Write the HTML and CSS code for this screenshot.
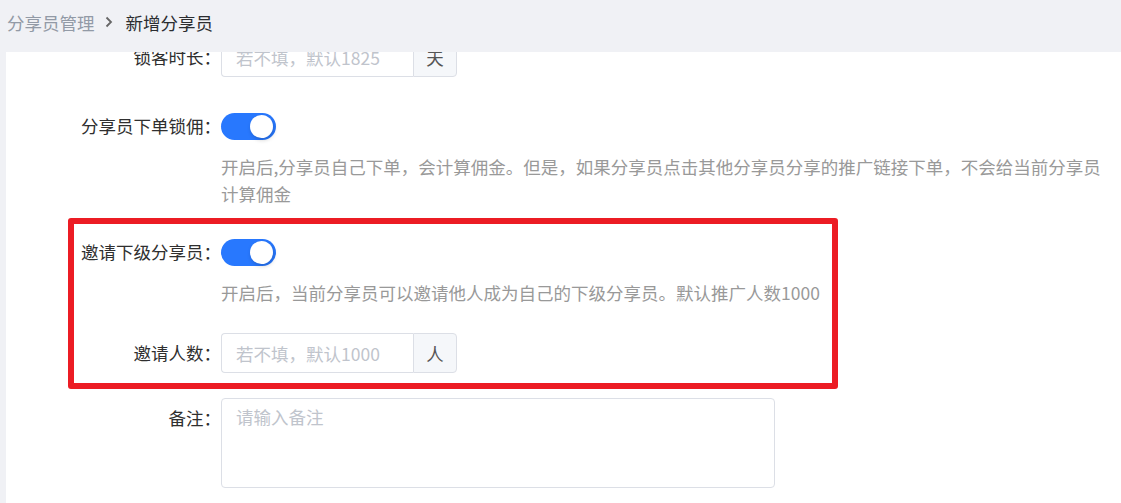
FILE: index.html
```html
<!DOCTYPE html>
<html lang="zh">
<head>
<meta charset="utf-8">
<link rel="stylesheet" href="styles.css">
</head>
<body>
<div class="page">
  <header class="crumbs">
    <span class="crumb-link">分享员管理</span>
    <svg class="crumb-sep" width="8" height="12" viewBox="0 0 8 12"><path d="M1.5 1.5 L6 6 L1.5 10.5" fill="none" stroke="#666" stroke-width="1.8"/></svg>
    <span class="crumb-current">新增分享员</span>
  </header>
  <main class="content">
    <form class="form">
      <div class="item item-first">
        <label class="item-label">锁客时长：</label>
        <div class="item-body">
          <div class="input-group">
            <input class="input" placeholder="若不填，默认1825">
            <span class="append">天</span>
          </div>
        </div>
      </div>
      <div class="item">
        <label class="item-label">分享员下单锁佣：</label>
        <div class="item-body">
          <div class="switch-row"><span class="switch is-on"><span class="knob"></span></span></div>
          <p class="hint">开启后,分享员自己下单，会计算佣金。但是，如果分享员点击其他分享员分享的推广链接下单，不会给当前分享员计算佣金</p>
        </div>
      </div>
      <div class="item item-invite">
        <label class="item-label">邀请下级分享员：</label>
        <div class="item-body">
          <div class="switch-row"><span class="switch is-on"><span class="knob"></span></span></div>
          <p class="hint">开启后，当前分享员可以邀请他人成为自己的下级分享员。默认推广人数1000</p>
        </div>
      </div>
      <div class="item">
        <label class="item-label">邀请人数：</label>
        <div class="item-body">
          <div class="input-group">
            <input class="input" placeholder="若不填，默认1000">
            <span class="append">人</span>
          </div>
        </div>
      </div>
      <div class="item">
        <label class="item-label">备注：</label>
        <div class="item-body">
          <textarea class="textarea" placeholder="请输入备注"></textarea>
        </div>
      </div>
    </form>
    <div class="highlight"></div>
  </main>
</div>
</body>
</html>
```

FILE: styles.css
```css
* { box-sizing: border-box; }
html, body { margin: 0; padding: 0; }
body {
  background: #f0f1f5;
  font-family: "Noto Sans CJK SC", "Noto Sans", sans-serif;
  font-size: 17.5px;
  color: #333;
  width: 1121px;
  height: 503px;
  overflow: hidden;
}
.page { display: flex; flex-direction: column; height: 503px; }
.crumbs {
  height: 52px;
  flex: none;
  display: flex;
  align-items: center;
  padding: 0 7px 8px;
  position: relative;
  z-index: 2;
  background: #f0f1f5;
}
.crumb-link { color: #929aa6; }
.crumb-sep { margin: 0 13px 0 10px; }
.crumb-current { color: #2b2d30; }
.content {
  flex: 1;
  margin-left: 6px;
  background: #fff;
  overflow: hidden;
  position: relative;
}
.form { margin: -15px 0 0; padding: 0; }
.item { display: flex; margin-bottom: 25px; }
.item-first { margin-bottom: 29px; }
.item-invite { margin-bottom: 27px; }
.item-label {
  width: 215px;
  flex: none;
  text-align: right;
  line-height: 40px;
  color: #2f2f2f;
}
.item-body { flex: 1; min-width: 0; padding-right: 14px; }
.input-group { display: flex; height: 40px; width: 236px; }
.input {
  width: 192px;
  height: 40px;
  border: 1px solid #dcdfe6;
  border-right: none;
  border-radius: 4px 0 0 4px;
  padding: 0 14px;
  font: inherit;
  color: #606266;
  outline: none;
}
.input::placeholder, .textarea::placeholder { color: #c0c4cc; }
.append {
  width: 44px;
  height: 40px;
  border: 1px solid #dcdfe6;
  border-radius: 0 4px 4px 0;
  background: #f5f7fa;
  color: #555;
  display: flex;
  align-items: center;
  justify-content: center;
}
.switch-row { height: 40px; display: flex; align-items: center; }
.switch {
  width: 55px;
  height: 27px;
  border-radius: 14px;
  background: #2878fe;
  position: relative;
  display: inline-block;
}
.knob {
  position: absolute;
  top: 2px;
  right: 3px;
  width: 23px;
  height: 23px;
  border-radius: 50%;
  background: #fff;
  box-shadow: 1px 2px 4px rgba(0,0,0,0.18);
}
.hint {
  margin: 7px 0 0;
  line-height: 27px;
  color: #999;
}
.textarea {
  display: block;
  width: 554px;
  height: 90px;
  border: 1px solid #dcdfe6;
  border-radius: 4px;
  padding: 4px 14px;
  font: inherit;
  line-height: 27px;
  resize: none;
  outline: none;
}
.highlight {
  position: absolute;
  left: 62px;
  top: 166px;
  width: 770px;
  height: 171px;
  border: 6px solid #ec1c24;
  border-radius: 3px;
  pointer-events: none;
}
```
